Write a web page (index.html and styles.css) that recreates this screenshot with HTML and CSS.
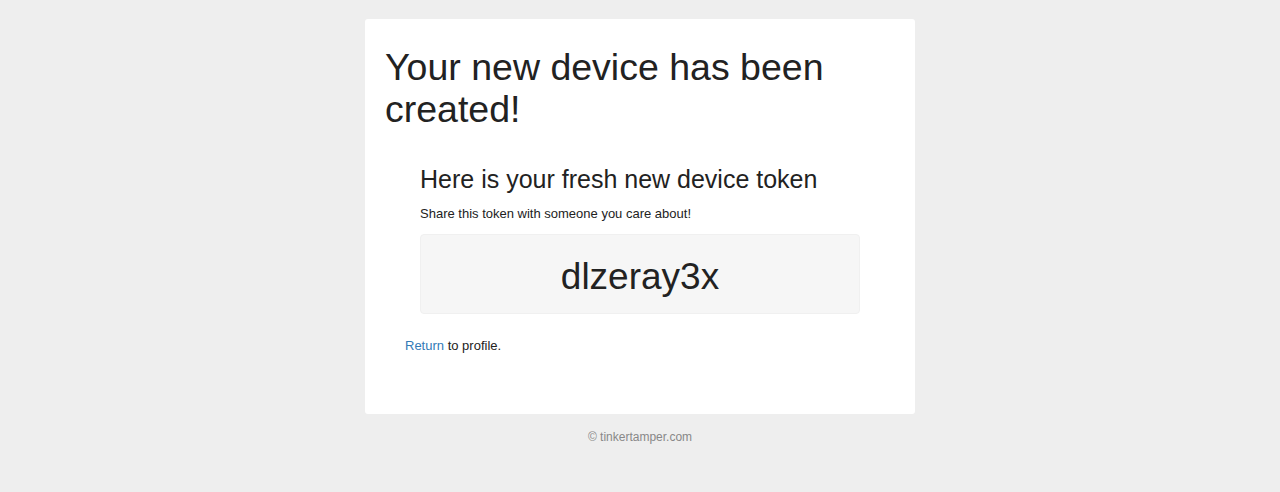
FILE: index.html
```html
<!DOCTYPE html>
<html lang="en">
<head>
<meta charset="utf-8">
<title>Device created</title>
<link rel="stylesheet" href="styles.css">
</head>
<body>
  <main class="card">
    <h1 class="title">Your new device has been created!</h1>
    <div class="content">
      <section class="token-section">
        <h3 class="subtitle">Here is your fresh new device token</h3>
        <p class="hint">Share this token with someone you care about!</p>
        <div class="token-box">dlzeray3x</div>
      </section>
      <p class="return"><a href="#" class="link">Return</a> to profile.</p>
    </div>
  </main>
  <footer class="footer">© tinkertamper.com</footer>
</body>
</html>
```

FILE: styles.css
```css
html, body {
  margin: 0;
  padding: 0;
}

body {
  background: #eeeeee;
  font-family: "Liberation Sans", Arial, sans-serif;
  color: #333333;
  font-size: 13px;
  line-height: 20px;
}

.card {
  width: 550px;
  box-sizing: border-box;
  margin: 19px auto 0;
  background: #ffffff;
  border-radius: 3px;
  padding: 27px 20px 58px;
}

.title {
  margin: 0;
  font-size: 37.5px;
  line-height: 42px;
  font-weight: 400;
  color: #222222;
}

.content {
  padding: 0 20px;
}

.token-section {
  margin: 36px 15px 0;
}

.subtitle {
  margin: 0;
  font-size: 25px;
  line-height: 27.5px;
  font-weight: 400;
  color: #222222;
}

.hint {
  margin: 10px 0 0;
  font-size: 13px;
  line-height: 20px;
  color: #222222;
}

.token-box {
  margin-top: 10.5px;
  background: #f6f6f6;
  border: 1px solid #f0f0f0;
  border-radius: 4px;
  padding: 21px 0 16px;
  text-align: center;
  font-size: 37px;
  line-height: 41px;
  color: #222222;
}

.return {
  margin: 21.5px 0 0;
  font-size: 13px;
  line-height: 20px;
  color: #222222;
}

.link {
  color: #337ab7;
  text-decoration: none;
}

.footer {
  margin-top: 15px;
  text-align: center;
  font-size: 12px;
  line-height: 17px;
  color: #888888;
}
```
